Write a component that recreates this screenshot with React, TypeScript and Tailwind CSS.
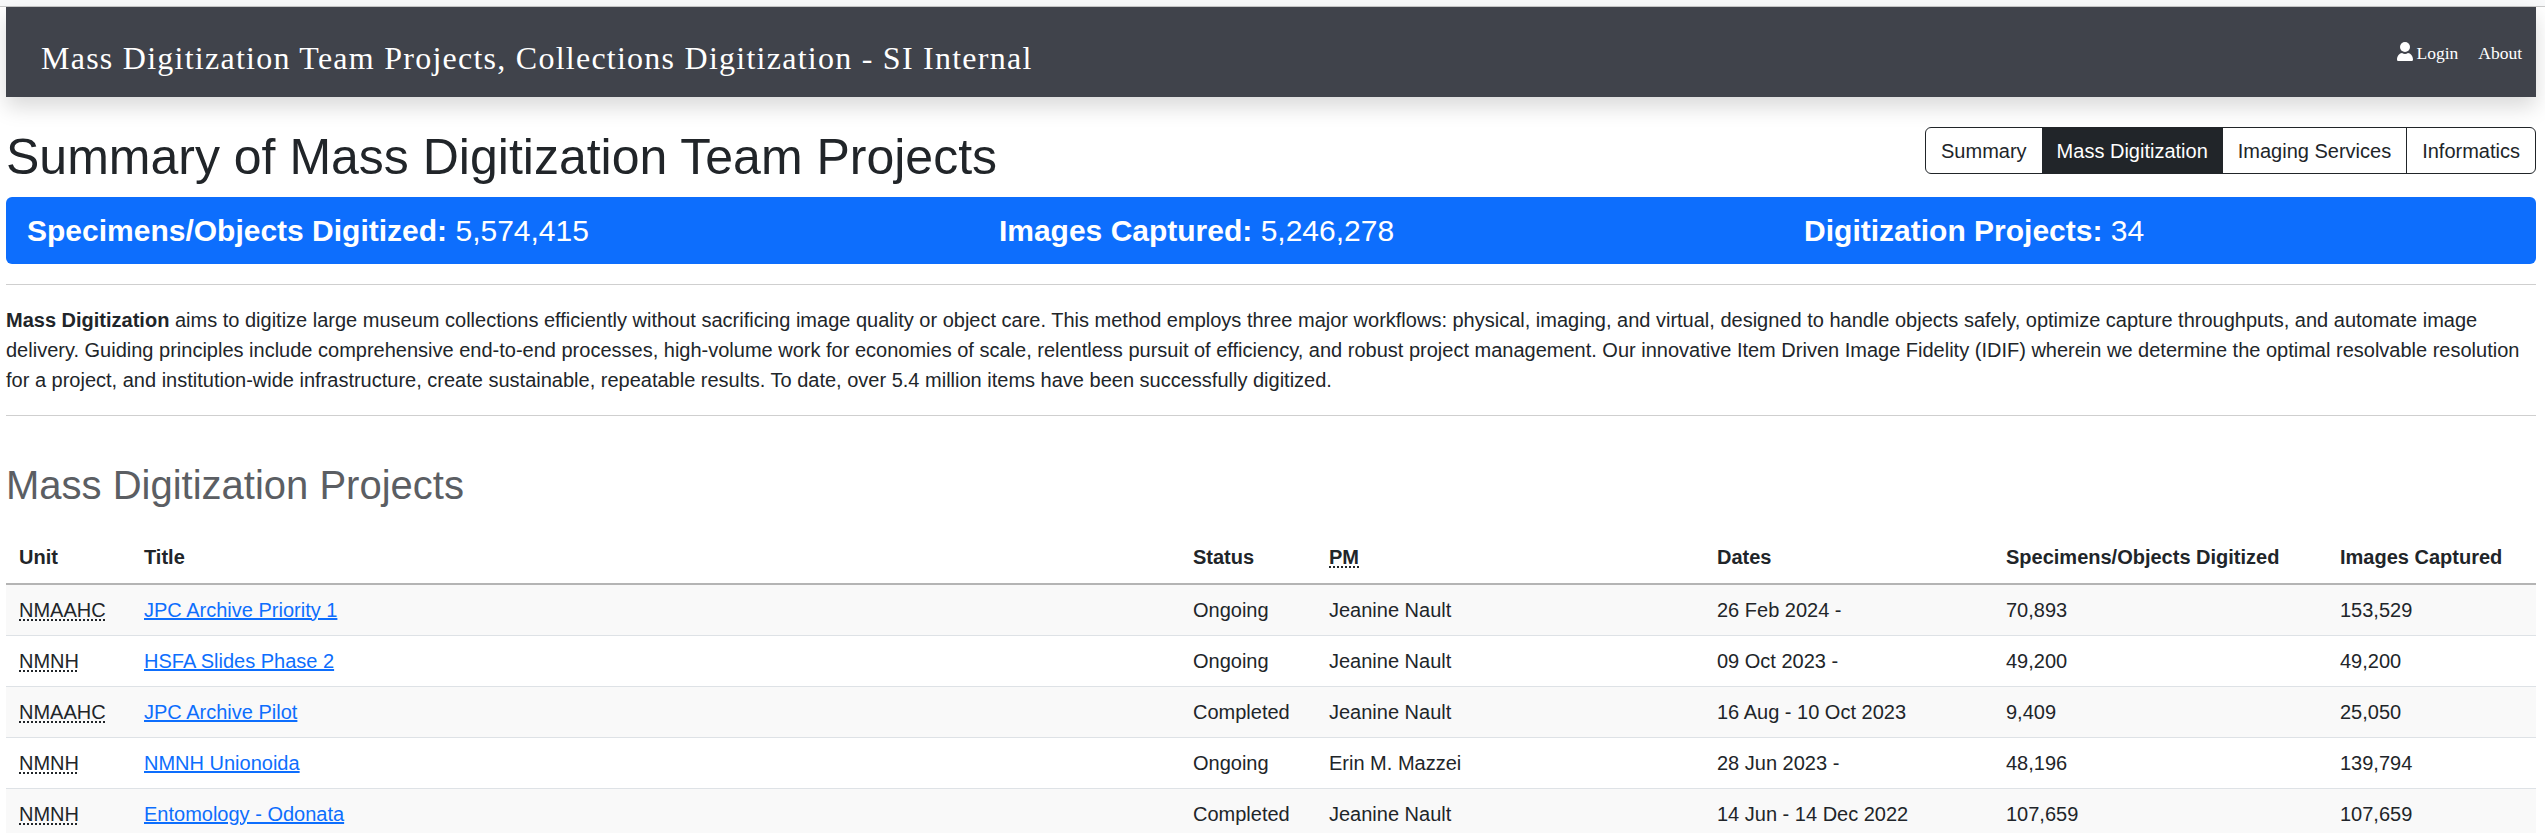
import React from "react";

const rows = [
  { unit: "NMAAHC", title: "JPC Archive Priority 1", status: "Ongoing", pm: "Jeanine Nault", dates: "26 Feb 2024 -", objects: "70,893", images: "153,529" },
  { unit: "NMNH", title: "HSFA Slides Phase 2", status: "Ongoing", pm: "Jeanine Nault", dates: "09 Oct 2023 -", objects: "49,200", images: "49,200" },
  { unit: "NMAAHC", title: "JPC Archive Pilot", status: "Completed", pm: "Jeanine Nault", dates: "16 Aug - 10 Oct 2023", objects: "9,409", images: "25,050" },
  { unit: "NMNH", title: "NMNH Unionoida", status: "Ongoing", pm: "Erin M. Mazzei", dates: "28 Jun 2023 -", objects: "48,196", images: "139,794" },
  { unit: "NMNH", title: "Entomology - Odonata", status: "Completed", pm: "Jeanine Nault", dates: "14 Jun - 14 Dec 2022", objects: "107,659", images: "107,659" },
];

const tabs = ["Summary", "Mass Digitization", "Imaging Services", "Informatics"];

const App = () => {
  return (
    <div className="h-[833px] overflow-hidden bg-white font-['Liberation_Sans',Arial,sans-serif] text-[#212529]">
      <div className="h-[7px] border-b border-[#c8c8c8] bg-[#f8f9fa]" />
      <div className="mx-[6px] w-[2530px]">
        <nav className="flex h-[90px] items-center justify-between bg-[#40434b] pl-[35px] pr-[14px] shadow-[0_10px_20px_rgba(0,0,0,0.15)] font-['Liberation_Serif',serif] text-white">
          <span className="pt-[11px] text-[32px] leading-[40px] tracking-[1.25px]">Mass Digitization Team Projects, Collections Digitization - SI Internal</span>
          <div className="flex items-center gap-[20px] pt-[2px] text-[17.5px]">
            <a className="flex items-center gap-[3px]">
              <svg className="mb-[3px]" width="16" height="19" viewBox="0 0 16 19" fill="currentColor">
                <circle cx="8" cy="5" r="5" />
                <path d="M0 17.5C0 14 2.5 11 5 11c1 .6 2 1 3 1s2-.4 3-1c2.500 0 5 3 5 6.500 0 1-.7 1.500-1.500 1.500h-13C.7 19 0 18.500 0 17.500Z" />
              </svg>
              Login
            </a>
            <a>About</a>
          </div>
        </nav>

        <div className="mt-[30px] flex h-[60px] items-start justify-between">
          <h1 className="text-[50px] leading-[60px]">Summary of Mass Digitization Team Projects</h1>
          <div className="flex h-[47px] rounded-[6px] border border-[#212529] text-[20px]">
            {tabs.map((t, i) => (
              <div
                key={t}
                className={
                  i === 1
                    ? "flex items-center bg-[#212529] px-[15px] text-white"
                    : i === 3
                      ? "flex items-center border-l border-[#212529] px-[15px]"
                      : "flex items-center px-[15px]"
                }
              >
                {t}
              </div>
            ))}
          </div>
        </div>

        <div className="mt-[10px] flex h-[67px] items-center gap-[410px] rounded-[6px] bg-[#0d6efd] px-[21px] text-[30px] text-white">
          <span><b>Specimens/Objects Digitized:</b> 5,574,415</span>
          <span><b>Images Captured:</b> 5,246,278</span>
          <span><b>Digitization Projects:</b> 34</span>
        </div>

        <hr className="mt-[20px] border-[#cfcfcf]" />
        <p className="mt-[20px] text-[20px] leading-[30px]">
          <b>Mass Digitization</b> aims to digitize large museum collections efficiently without sacrificing image quality or object care. This method employs three major workflows: physical, imaging, and virtual, designed to handle objects safely, optimize capture throughputs, and automate image delivery. Guiding principles include comprehensive end-to-end processes, high-volume work for economies of scale, relentless pursuit of efficiency, and robust project management. Our innovative Item Driven Image Fidelity (IDIF) wherein we determine the optimal resolvable resolution for a project, and institution-wide infrastructure, create sustainable, repeatable results. To date, over 5.4 million items have been successfully digitized.
        </p>
        <hr className="mt-[20px] border-[#cfcfcf]" />

        <h2 className="mt-[45px] text-[40px] leading-[48px] text-[#5b5e63]">Mass Digitization Projects</h2>

        <table className="mt-[24px] w-full table-fixed border-collapse text-[20px]">
          <colgroup>
            <col className="w-[125px]" />
            <col className="w-[1049px]" />
            <col className="w-[136px]" />
            <col className="w-[388px]" />
            <col className="w-[289px]" />
            <col className="w-[334px]" />
            <col className="w-[209px]" />
          </colgroup>
          <thead>
            <tr className="h-[51px] border-b-2 border-[#b4b4b4] text-left">
              <th className="px-[13px] pb-[3px]">Unit</th>
              <th className="px-[13px] pb-[3px]">Title</th>
              <th className="px-[13px] pb-[3px]">Status</th>
              <th className="px-[13px] pb-[3px]"><span className="underline decoration-dotted underline-offset-[3px]">PM</span></th>
              <th className="px-[13px] pb-[3px]">Dates</th>
              <th className="whitespace-nowrap px-[13px] pb-[3px]">Specimens/Objects Digitized</th>
              <th className="whitespace-nowrap px-[13px] pb-[3px]">Images Captured</th>
            </tr>
          </thead>
          <tbody>
            {rows.map((r, i) => (
              <tr key={i} className={i % 2 === 0 ? "h-[51px] border-b border-[#dee2e6] bg-[#f9f9f9]" : "h-[51px] border-b border-[#dee2e6]"}>
                <td className="px-[13px]"><span className="underline decoration-dotted underline-offset-[3px]">{r.unit}</span></td>
                <td className="px-[13px]"><a className="text-[#0d6efd] underline">{r.title}</a></td>
                <td className="px-[13px]">{r.status}</td>
                <td className="px-[13px]">{r.pm}</td>
                <td className="px-[13px]">{r.dates}</td>
                <td className="px-[13px]">{r.objects}</td>
                <td className="px-[13px]">{r.images}</td>
              </tr>
            ))}
          </tbody>
        </table>
      </div>
    </div>
  );
};

export default App;
